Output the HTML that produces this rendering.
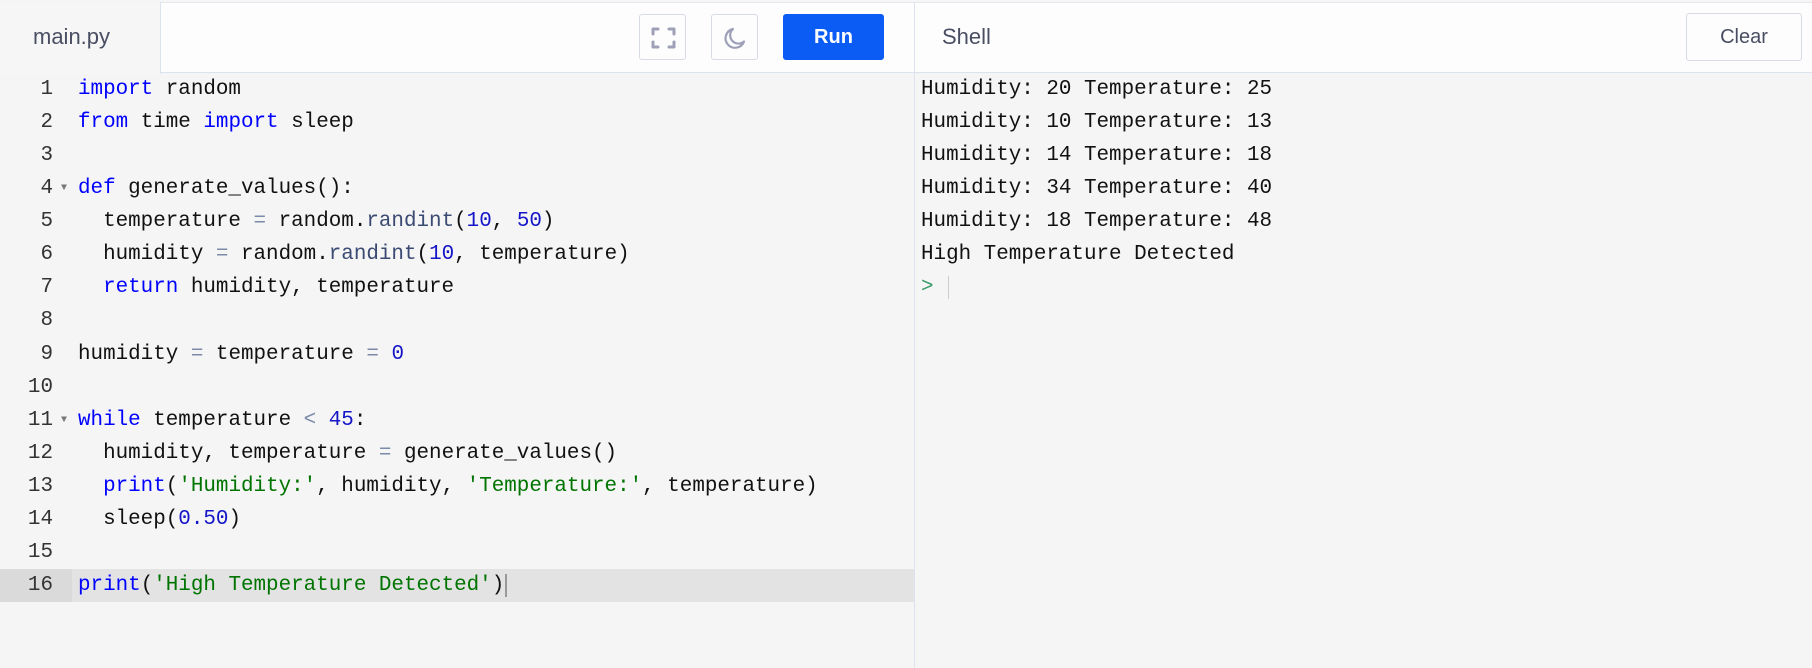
<!DOCTYPE html>
<html><head><meta charset="utf-8"><style>
*{margin:0;padding:0;box-sizing:border-box}
body{width:1812px;height:668px;background:#f5f5f5;position:relative;overflow:hidden;font-family:"Liberation Sans",sans-serif}
.hdr{position:absolute;left:0;top:2px;width:1812px;height:71px;background:#fdfdfd;border-top:1px solid #e4e8ef;border-bottom:1px solid #dde3ee}
.tab{position:absolute;left:0;top:2px;width:161px;height:72px;background:#f6f6f6;border-right:1px solid #dde3ee;color:#4a4e63;font-size:22px;padding:22px 0 0 33px}
.vdiv{position:absolute;left:914px;top:2px;width:1px;height:666px;background:#dde3ee}
.btn{position:absolute;border:1px solid #d6dbe6;border-radius:3px;background:#fdfdfd}
.run{position:absolute;left:783px;top:14px;width:101px;height:46px;background:#0b5cf5;border-radius:3px;color:#fff;font-weight:bold;font-size:20px;text-align:center;line-height:46px}
.shell{position:absolute;left:942px;top:24px;color:#4a4e63;font-size:22px}
.clear{left:1686px;top:13px;width:116px;height:48px;color:#4a4e63;font-size:20px;text-align:center;line-height:46px}
.code{position:absolute;left:0;top:73px;width:914px;font-family:"Liberation Mono",monospace;font-size:20.9px;line-height:33.07px}
.ln{position:relative;height:33.07px;white-space:pre;color:#111}
.ln .n{position:absolute;left:0;width:53px;text-align:right;color:#333}
.ln .t{position:absolute;left:78px}
.ln .f{position:absolute;left:61px;top:0;color:#777;font-size:10px}
.hl{background:#e3e3e3}
.hl .g{position:absolute;left:0;top:0;width:72px;height:100%;background:#dadada}
.k{color:#0000ff}.s{color:#007400}.m{color:#1414c8}.o{color:#7a8aa8}.p{color:#3b4a73}
.out{position:absolute;left:921px;top:73px;font-family:"Liberation Mono",monospace;font-size:20.9px;line-height:33.07px;white-space:pre;color:#111}
</style></head><body>
<div class="hdr"></div>
<div class="tab">main.py</div>
<div class="btn" style="left:639px;top:14px;width:47px;height:46px"><svg width="47" height="46" viewBox="0 0 47 46"><path d="M13 19v-5h5M29 14h5v5M34 27v5h-5M18 32h-5v-5" fill="none" stroke="#9ea0b8" stroke-width="3" stroke-linecap="round" stroke-linejoin="round"/></svg></div>
<div class="btn" style="left:711px;top:14px;width:47px;height:46px"><svg width="47" height="46" viewBox="0 0 47 46"><path d="M21 14a9.5 9.5 0 1 0 11 12.5A8 8 0 0 1 21 14z" fill="none" stroke="#9ea0b8" stroke-width="2.2" stroke-linejoin="round"/></svg></div>
<div class="run">Run</div>
<div class="shell">Shell</div>
<div class="btn clear">Clear</div>
<div class="vdiv"></div>
<div class="code">
<div class="ln"><span class="n">1</span><span class="t"><span class="k">import</span> random</span></div>
<div class="ln"><span class="n">2</span><span class="t"><span class="k">from</span> time <span class="k">import</span> sleep</span></div>
<div class="ln"><span class="n">3</span></div>
<div class="ln"><span class="n">4</span><span class="f">▼</span><span class="t"><span class="k">def</span> generate_values():</span></div>
<div class="ln"><span class="n">5</span><span class="t">  temperature <span class="o">=</span> random.<span class="p">randint</span>(<span class="m">10</span>, <span class="m">50</span>)</span></div>
<div class="ln"><span class="n">6</span><span class="t">  humidity <span class="o">=</span> random.<span class="p">randint</span>(<span class="m">10</span>, temperature)</span></div>
<div class="ln"><span class="n">7</span><span class="t">  <span class="k">return</span> humidity, temperature</span></div>
<div class="ln"><span class="n">8</span></div>
<div class="ln"><span class="n">9</span><span class="t">humidity <span class="o">=</span> temperature <span class="o">=</span> <span class="m">0</span></span></div>
<div class="ln"><span class="n">10</span></div>
<div class="ln"><span class="n">11</span><span class="f">▼</span><span class="t"><span class="k">while</span> temperature <span class="o">&lt;</span> <span class="m">45</span>:</span></div>
<div class="ln"><span class="n">12</span><span class="t">  humidity, temperature <span class="o">=</span> generate_values()</span></div>
<div class="ln"><span class="n">13</span><span class="t">  <span class="k">print</span>(<span class="s">'Humidity:'</span>, humidity, <span class="s">'Temperature:'</span>, temperature)</span></div>
<div class="ln"><span class="n">14</span><span class="t">  sleep(<span class="m">0.50</span>)</span></div>
<div class="ln"><span class="n">15</span></div>
<div class="ln hl"><span class="g"></span><span class="n">16</span><span class="t"><span class="k">print</span>(<span class="s">'High Temperature Detected'</span>)<span style="border-left:2px solid #999;margin-left:1px"></span></span></div>
</div>
<div class="out">Humidity: 20 Temperature: 25
Humidity: 10 Temperature: 13
Humidity: 14 Temperature: 18
Humidity: 34 Temperature: 40
Humidity: 18 Temperature: 48
High Temperature Detected
<span style="color:#3a9a6a">&gt;</span> <span style="border-left:1px solid #ccc;margin-left:2px"> </span></div>
</body></html>
